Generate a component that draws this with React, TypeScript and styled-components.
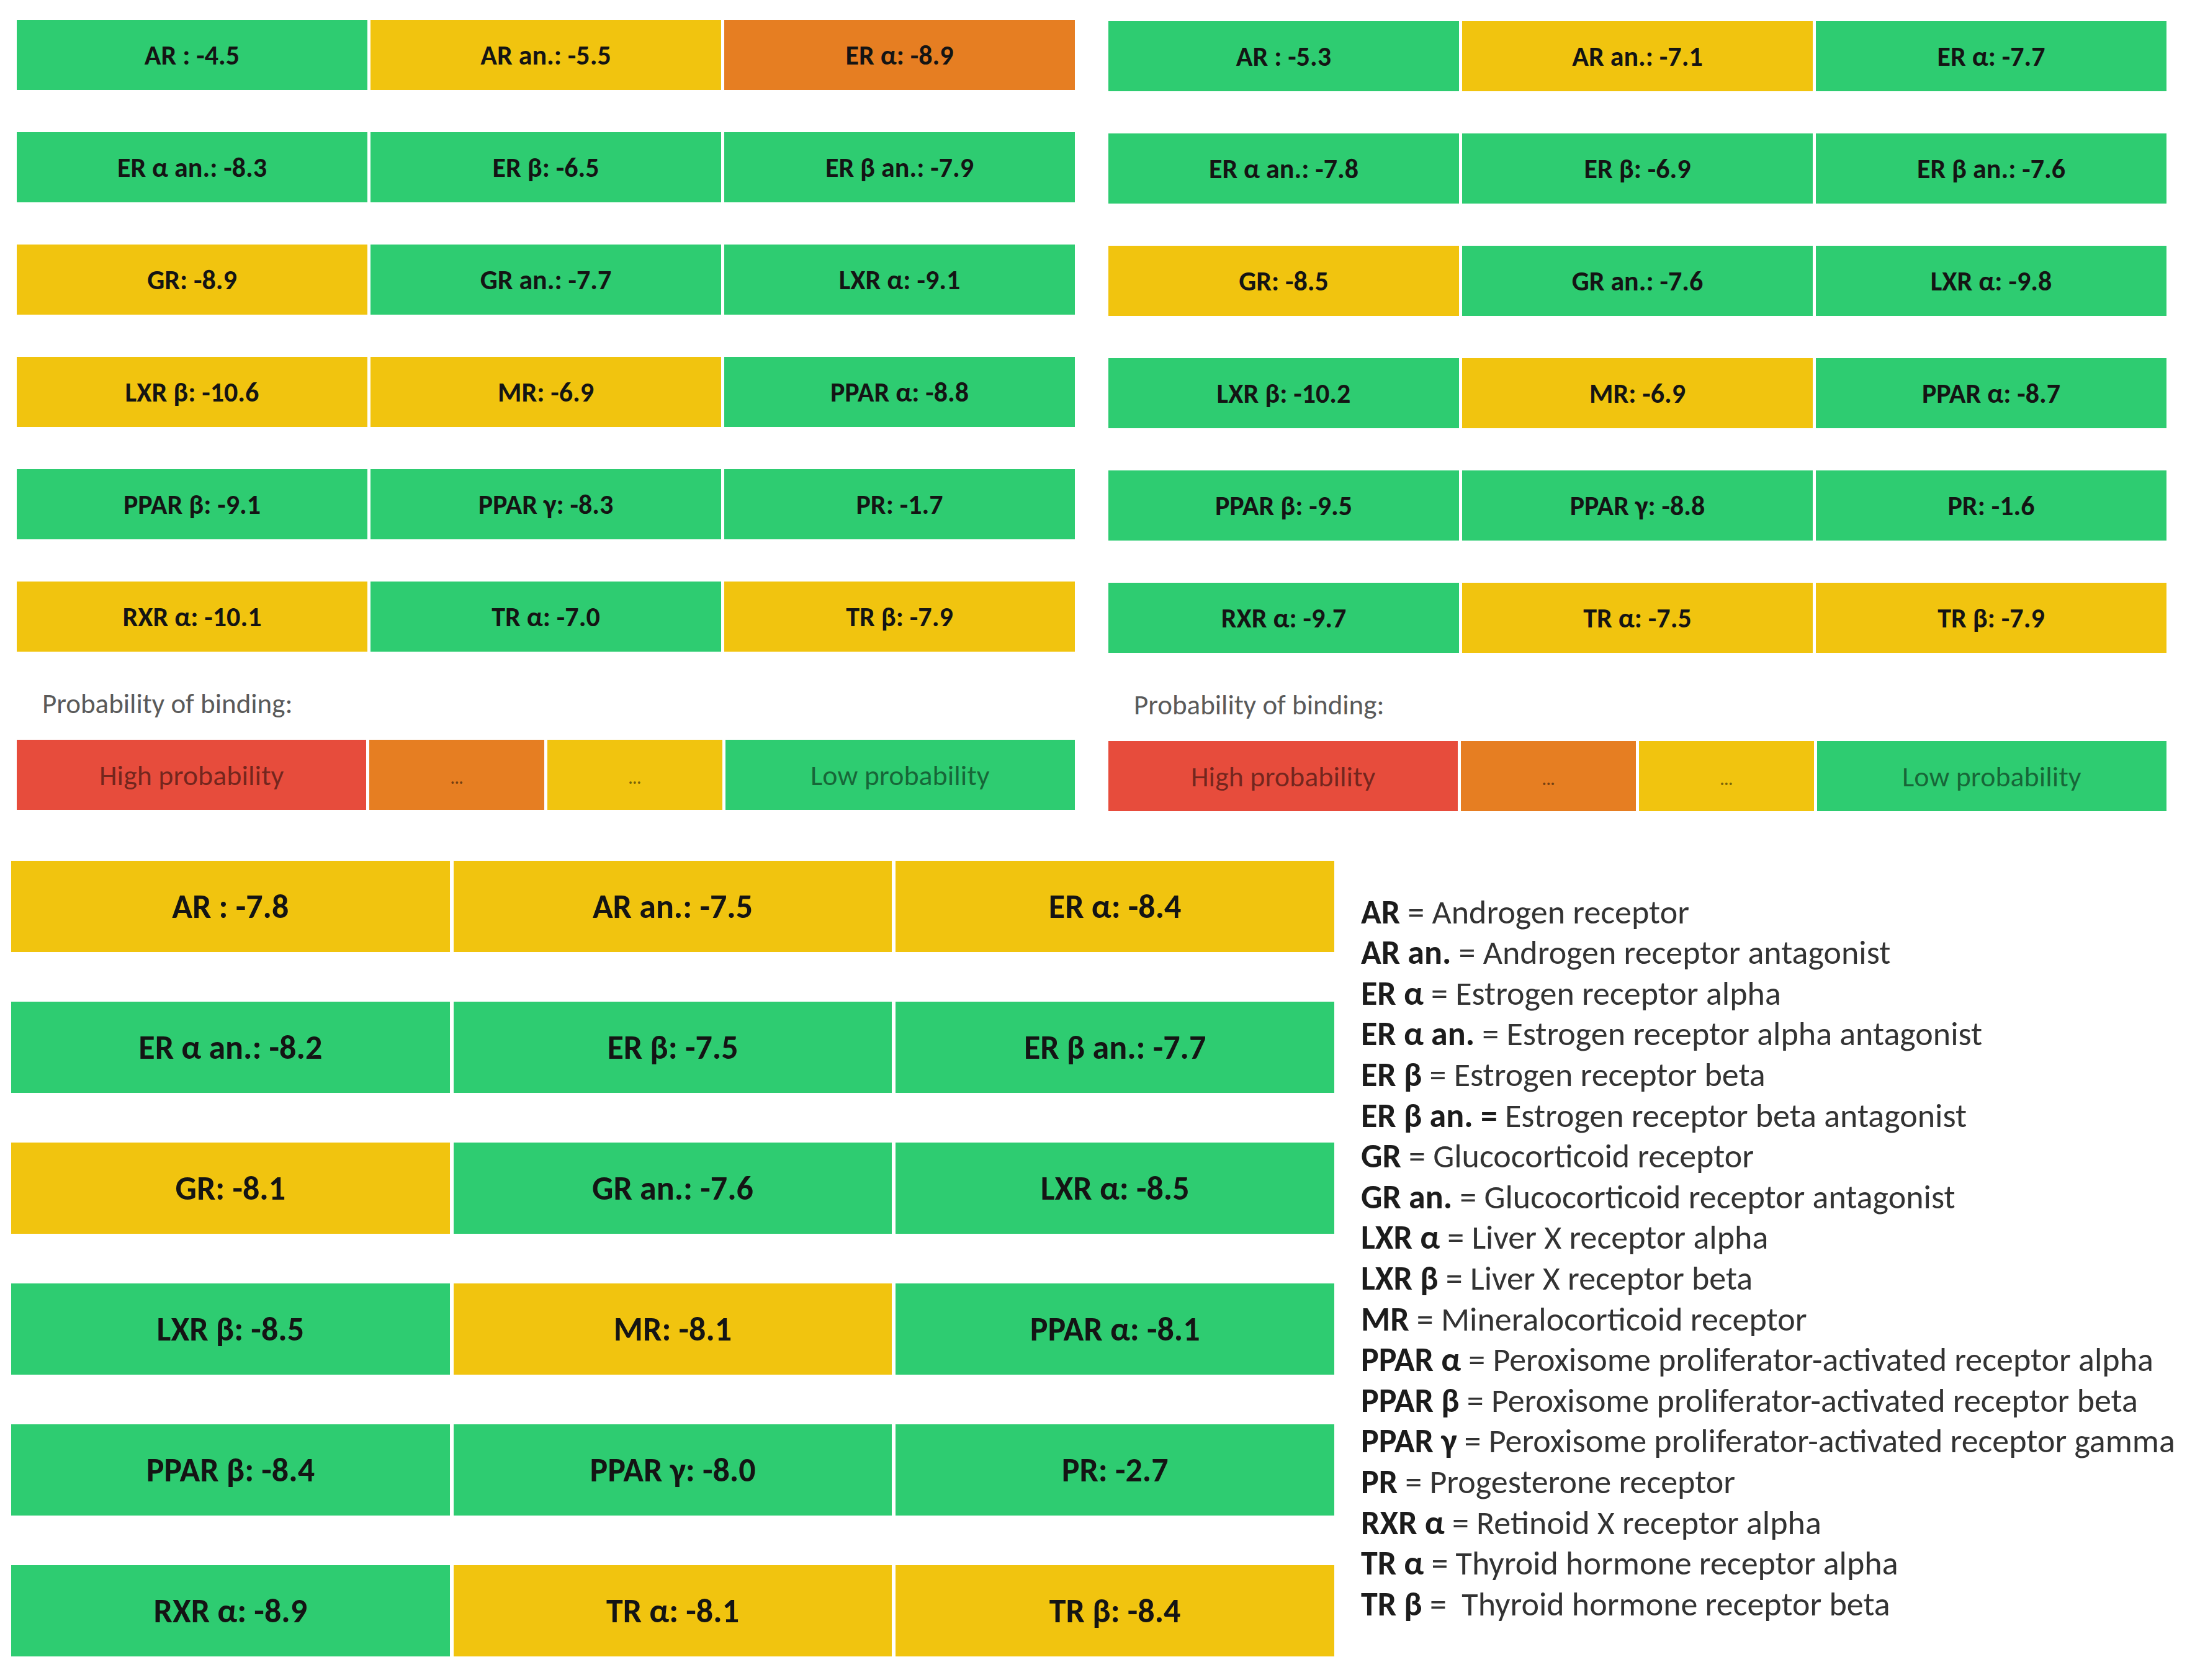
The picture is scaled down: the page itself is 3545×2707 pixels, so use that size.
import React from 'react'
import styled, { createGlobalStyle } from 'styled-components'

type Level = 'high' | 'orange' | 'mid' | 'low'

const colors: Record<Level, string> = {
    high: '#e74c3c',
    orange: '#e67e22',
    mid: '#f1c40f',
    low: '#2ecc71',
}

type Score = [string, Level]

const G: Level = 'low'
const Y: Level = 'mid'
const O: Level = 'orange'

const leftScores: Score[] = [
    ['AR : -4.5', G], ['AR an.: -5.5', Y], ['ER α: -8.9', O],
    ['ER α an.: -8.3', G], ['ER β: -6.5', G], ['ER β an.: -7.9', G],
    ['GR: -8.9', Y], ['GR an.: -7.7', G], ['LXR α: -9.1', G],
    ['LXR β: -10.6', Y], ['MR: -6.9', Y], ['PPAR α: -8.8', G],
    ['PPAR β: -9.1', G], ['PPAR γ: -8.3', G], ['PR: -1.7', G],
    ['RXR α: -10.1', Y], ['TR α: -7.0', G], ['TR β: -7.9', Y],
]

const rightScores: Score[] = [
    ['AR : -5.3', G], ['AR an.: -7.1', Y], ['ER α: -7.7', G],
    ['ER α an.: -7.8', G], ['ER β: -6.9', G], ['ER β an.: -7.6', G],
    ['GR: -8.5', Y], ['GR an.: -7.6', G], ['LXR α: -9.8', G],
    ['LXR β: -10.2', G], ['MR: -6.9', Y], ['PPAR α: -8.7', G],
    ['PPAR β: -9.5', G], ['PPAR γ: -8.8', G], ['PR: -1.6', G],
    ['RXR α: -9.7', G], ['TR α: -7.5', Y], ['TR β: -7.9', Y],
]

const bottomScores: Score[] = [
    ['AR : -7.8', Y], ['AR an.: -7.5', Y], ['ER α: -8.4', Y],
    ['ER α an.: -8.2', G], ['ER β: -7.5', G], ['ER β an.: -7.7', G],
    ['GR: -8.1', Y], ['GR an.: -7.6', G], ['LXR α: -8.5', G],
    ['LXR β: -8.5', G], ['MR: -8.1', Y], ['PPAR α: -8.1', G],
    ['PPAR β: -8.4', G], ['PPAR γ: -8.0', G], ['PR: -2.7', G],
    ['RXR α: -8.9', G], ['TR α: -8.1', Y], ['TR β: -8.4', Y],
]

const glossary: [string, string][] = [
    ['AR', 'Androgen receptor'],
    ['AR an.', 'Androgen receptor antagonist'],
    ['ER α', 'Estrogen receptor alpha'],
    ['ER α an.', 'Estrogen receptor alpha antagonist'],
    ['ER β', 'Estrogen receptor beta'],
    ['ER β an. =', 'Estrogen receptor beta antagonist'],
    ['GR', 'Glucocorticoid receptor'],
    ['GR an.', 'Glucocorticoid receptor antagonist'],
    ['LXR α', 'Liver X receptor alpha'],
    ['LXR β', 'Liver X receptor beta'],
    ['MR', 'Mineralocorticoid receptor'],
    ['PPAR α', 'Peroxisome proliferator-activated receptor alpha'],
    ['PPAR β', 'Peroxisome proliferator-activated receptor beta'],
    ['PPAR γ', 'Peroxisome proliferator-activated receptor gamma'],
    ['PR', 'Progesterone receptor'],
    ['RXR α', 'Retinoid X receptor alpha'],
    ['TR α', 'Thyroid hormone receptor alpha'],
    ['TR β', '\u00a0Thyroid hormone receptor beta'],
]

function ScorePanel({ scores, offset = 0 }: { scores: Score[]; offset?: number }) {
    return (
        <Panel offset={offset}>
            <SmallGrid>
                {scores.map(([label, level]) => (
                    <SmallCell key={label} level={level}>
                        {label}
                    </SmallCell>
                ))}
            </SmallGrid>
            <Caption>Probability of binding:</Caption>
            <LegendBar>
                <LegendCell level="high">High probability</LegendCell>
                <LegendCell level="orange" small>
                    ...
                </LegendCell>
                <LegendCell level="mid" small>
                    ...
                </LegendCell>
                <LegendCell level="low">Low probability</LegendCell>
            </LegendBar>
        </Panel>
    )
}

export default function App(): JSX.Element {
    return (
        <>
            <GlobalStyle />
            <Page>
                <TopRow>
                    <ScorePanel scores={leftScores} />
                    <ScorePanel scores={rightScores} offset={2} />
                </TopRow>
                <BottomRow>
                    <BigGrid>
                        {bottomScores.map(([label, level]) => (
                            <BigCell key={label} level={level}>
                                {label}
                            </BigCell>
                        ))}
                    </BigGrid>
                    <Glossary>
                        {glossary.map(([term, meaning]) => (
                            <GlossaryLine key={term}>
                                <Term>{term}</Term>
                                {term.endsWith('=') ? ' ' : ' = '}
                                {meaning}
                            </GlossaryLine>
                        ))}
                    </Glossary>
                </BottomRow>
            </Page>
        </>
    )
}

const GlobalStyle = createGlobalStyle`
    html, body {
        margin: 0;
        padding: 0;
        background: #ffffff;
    }
    body {
        font-family: Carlito, Lato, "Open Sans", sans-serif;
    }
`

const Page = styled.div`
    width: 3545px;
    height: 2707px;
    box-sizing: border-box;
    padding: 32px 0 0 18px;
    background: #ffffff;
`

const TopRow = styled.div`
    display: flex;
    align-items: flex-start;
    gap: 54px;
    padding-left: 9px;
`

const Panel = styled.div<{ offset: number }>`
    width: 1705px;
    display: flex;
    flex-direction: column;
    margin-top: ${(p) => p.offset}px;
`

const SmallGrid = styled.div`
    display: grid;
    grid-template-columns: repeat(3, 1fr);
    column-gap: 5px;
    row-gap: 68px;
`

const SmallCell = styled.div<{ level: Level }>`
    height: 113px;
    display: flex;
    align-items: center;
    justify-content: center;
    background: ${(p) => colors[p.level]};
    color: #141414;
    font-size: 44px;
    font-weight: 700;
    white-space: pre;
`

const Caption = styled.p`
    margin: 60px 0 34px 41px;
    font-size: 45px;
    line-height: 48px;
    color: #5a5a5a;
`

const LegendBar = styled.div`
    display: grid;
    grid-template-columns: 2fr 1fr 1fr 2fr;
    column-gap: 5px;
    height: 113px;
    margin-bottom: 80px;
`

const LegendCell = styled.div<{ level: Level; small?: boolean }>`
    display: flex;
    align-items: center;
    justify-content: center;
    background: ${(p) => colors[p.level]};
    color: rgba(0, 0, 0, 0.5);
    font-size: ${(p) => (p.small ? '26px' : '46px')};
    font-weight: ${(p) => (p.small ? 700 : 400)};
    padding-top: ${(p) => (p.small ? '10px' : '0')};
`

const BottomRow = styled.div`
    display: flex;
    align-items: center;
    gap: 43px;
`

const BigGrid = styled.div`
    width: 2132px;
    display: grid;
    grid-template-columns: repeat(3, 1fr);
    column-gap: 6px;
    row-gap: 80px;
`

const BigCell = styled.div<{ level: Level }>`
    height: 147px;
    display: flex;
    align-items: center;
    justify-content: center;
    background: ${(p) => colors[p.level]};
    color: #141414;
    font-size: 54px;
    font-weight: 700;
`

const Glossary = styled.div`
    display: flex;
    flex-direction: column;
    color: #333333;
    font-size: 54px;
    line-height: 65.6px;
`

const GlossaryLine = styled.div`
    white-space: pre;
`

const Term = styled.span`
    font-weight: 700;
    color: #1c1c1c;
`
